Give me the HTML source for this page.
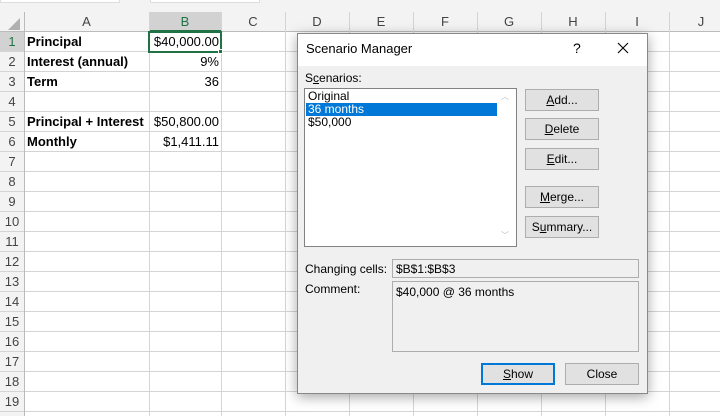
<!DOCTYPE html>
<html><head><style>
*{margin:0;padding:0;box-sizing:border-box}
body{width:720px;height:416px;overflow:hidden;background:#fff;font-family:"Liberation Sans",sans-serif;position:relative}
.a{position:absolute}
.hl{position:absolute;left:0;width:720px;height:1px;background:#d4d4d4}
.vl{position:absolute;top:12px;width:1px;height:404px;background:#d4d4d4}
.ch{position:absolute;top:12px;height:20px;font-size:13px;color:#444;text-align:center;line-height:20px}
.rh{position:absolute;left:0;width:24px;height:20px;font-size:13px;color:#444;text-align:center;line-height:20px}
.c{position:absolute;font-size:13px;line-height:20px;color:#000}
.b{font-weight:bold}
.btn{position:absolute;left:525px;width:74px;height:22px;background:#e1e1e1;border:1px solid #adadad;font-size:12px;text-align:center;line-height:20px;color:#000}
.d{font-size:12px;color:#000}
</style></head><body>
<div class="a" style="left:0;top:0;width:720px;height:12px;background:#f3f3f3"></div>
<div class="a" style="left:0;top:0;width:120px;height:3px;background:#fff;border:1px solid #ddd;border-top:none"></div>
<div class="a" style="left:150px;top:0;width:110px;height:3px;background:#fff;border:1px solid #ddd;border-top:none"></div>
<div class="a" style="left:0;top:12px;width:720px;height:20px;background:#f3f3f3"></div>
<div class="a" style="left:0;top:12px;width:24px;height:404px;background:#f3f3f3"></div>
<div class="a" style="left:149px;top:12px;width:72px;height:20px;background:#d2d2d2;border-bottom:2px solid #217346"></div>
<div class="a" style="left:0;top:32px;width:24px;height:20px;background:#d2d2d2"></div>
<div class="a" style="left:8px;top:18px;width:0;height:0;border-left:12px solid transparent;border-bottom:12px solid #b0b0b0"></div>
<div class="hl" style="top:31px;background:#bbb"></div>
<div class="hl" style="top:51px"></div><div class="hl" style="top:71px"></div><div class="hl" style="top:91px"></div><div class="hl" style="top:111px"></div><div class="hl" style="top:131px"></div><div class="hl" style="top:151px"></div><div class="hl" style="top:171px"></div><div class="hl" style="top:191px"></div><div class="hl" style="top:211px"></div><div class="hl" style="top:231px"></div><div class="hl" style="top:251px"></div><div class="hl" style="top:271px"></div><div class="hl" style="top:291px"></div><div class="hl" style="top:311px"></div><div class="hl" style="top:331px"></div><div class="hl" style="top:351px"></div><div class="hl" style="top:371px"></div><div class="hl" style="top:391px"></div><div class="hl" style="top:411px"></div>
<div class="vl" style="left:24px;background:#bbb"></div><div class="vl" style="left:149px"></div><div class="vl" style="left:221px"></div><div class="vl" style="left:285px"></div><div class="vl" style="left:349px"></div><div class="vl" style="left:413px"></div><div class="vl" style="left:477px"></div><div class="vl" style="left:541px"></div><div class="vl" style="left:605px"></div><div class="vl" style="left:669px"></div>
<div class="ch" style="left:24px;width:125px">A</div><div class="ch" style="left:149px;width:72px;color:#217346">B</div><div class="ch" style="left:221px;width:64px">C</div><div class="ch" style="left:285px;width:64px">D</div><div class="ch" style="left:349px;width:64px">E</div><div class="ch" style="left:413px;width:64px">F</div><div class="ch" style="left:477px;width:64px">G</div><div class="ch" style="left:541px;width:64px">H</div><div class="ch" style="left:605px;width:64px">I</div><div class="ch" style="left:669px;width:64px">J</div>
<div class="rh" style="top:32px;color:#217346">1</div><div class="rh" style="top:52px">2</div><div class="rh" style="top:72px">3</div><div class="rh" style="top:92px">4</div><div class="rh" style="top:112px">5</div><div class="rh" style="top:132px">6</div><div class="rh" style="top:152px">7</div><div class="rh" style="top:172px">8</div><div class="rh" style="top:192px">9</div><div class="rh" style="top:212px">10</div><div class="rh" style="top:232px">11</div><div class="rh" style="top:252px">12</div><div class="rh" style="top:272px">13</div><div class="rh" style="top:292px">14</div><div class="rh" style="top:312px">15</div><div class="rh" style="top:332px">16</div><div class="rh" style="top:352px">17</div><div class="rh" style="top:372px">18</div><div class="rh" style="top:392px">19</div>
<div class="c b" style="left:27px;top:32px">Principal</div>
<div class="c b" style="left:27px;top:52px">Interest (annual)</div>
<div class="c b" style="left:27px;top:72px">Term</div>
<div class="c b" style="left:27px;top:112px">Principal + Interest</div>
<div class="c b" style="left:27px;top:132px">Monthly</div>
<div class="c" style="left:149px;width:70px;text-align:right;top:32px">$40,000.00</div>
<div class="c" style="left:149px;width:70px;text-align:right;top:52px">9%</div>
<div class="c" style="left:149px;width:70px;text-align:right;top:72px">36</div>
<div class="c" style="left:149px;width:70px;text-align:right;top:112px">$50,800.00</div>
<div class="c" style="left:149px;width:70px;text-align:right;top:132px">$1,411.11</div>
<div class="a" style="left:148px;top:31px;width:74px;height:22px;border:2px solid #217346"></div>
<div class="a" style="left:218px;top:49px;width:5px;height:5px;background:#217346;border:1px solid #fff"></div>
<div class="a" style="left:297px;top:33px;width:351px;height:361px;background:#f0f0f0;border:1px solid #888;box-shadow:0 3px 12px rgba(0,0,0,.35)"></div>
<div class="a" style="left:298px;top:34px;width:349px;height:32px;background:#fff"></div>
<div class="a d" style="left:306px;top:41px;font-size:13px">Scenario Manager</div>
<div class="a d" style="left:573px;top:40px;font-size:14px">?</div>
<svg class="a" style="left:617px;top:42px" width="12" height="12"><path d="M1 1L11 11M11 1L1 11" stroke="#000" stroke-width="1.1"/></svg>
<div class="a d" style="left:305px;top:71px">S<u>c</u>enarios:</div>
<div class="a" style="left:304px;top:88px;width:213px;height:159px;background:#fff;border:1px solid #828282"></div>
<div class="a" style="left:306px;top:103px;width:191px;height:13px;background:#0078d7"></div>
<div class="a d" style="left:308px;top:90px;font-size:12px;line-height:13px">Original<br><span style="color:#fff">36 months</span><br>$50,000</div>
<div class="a" style="left:501px;top:91px;font-size:8px;color:#bbb">︿</div>
<div class="a" style="left:501px;top:230px;font-size:8px;color:#bbb">﹀</div>
<div class="btn" style="top:89px"><u>A</u>dd...</div>
<div class="btn" style="top:118px"><u>D</u>elete</div>
<div class="btn" style="top:148px"><u>E</u>dit...</div>
<div class="btn" style="top:186px"><u>M</u>erge...</div>
<div class="btn" style="top:216px">S<u>u</u>mmary...</div>
<div class="a d" style="left:305px;top:262px">Changing cells:</div>
<div class="a" style="left:392px;top:259px;width:247px;height:19px;border:1px solid #adadad"></div>
<div class="a d" style="left:396px;top:262px">$B$1:$B$3</div>
<div class="a d" style="left:305px;top:282px">Comment:</div>
<div class="a" style="left:392px;top:281px;width:247px;height:71px;border:1px solid #adadad"></div>
<div class="a d" style="left:396px;top:285px">$40,000 @ 36 months</div>
<div class="btn" style="left:481px;top:363px;width:74px;border:2px solid #0078d7;line-height:18px"><u>S</u>how</div>
<div class="btn" style="left:565px;top:363px;width:74px">Close</div>
</body></html>
